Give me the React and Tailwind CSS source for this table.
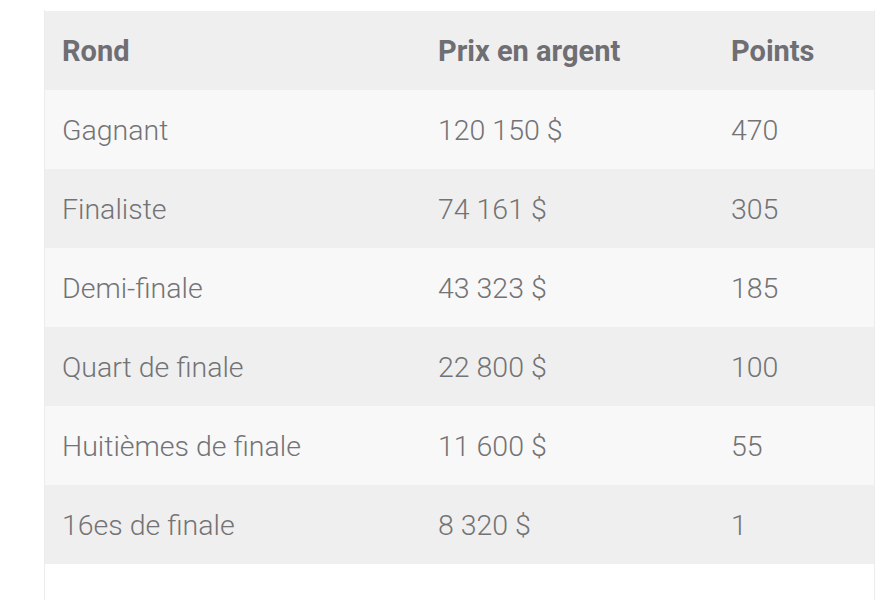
const rows = [
  ["Gagnant", "120 150 $", "470"],
  ["Finaliste", "74 161 $", "305"],
  ["Demi-finale", "43 323 $", "185"],
  ["Quart de finale", "22 800 $", "100"],
  ["Huitièmes de finale", "11 600 $", "55"],
  ["16es de finale", "8 320 $", "1"],
];

const App = () => {
  return (
    <div
      className="h-screen bg-white pt-[10px] pl-[44px] pr-[5px] overflow-hidden"
      style={{ fontFamily: "Roboto, 'Liberation Sans', sans-serif" }}
    >
      <div className="h-full border-x border-[#ececec] pt-px">
        <table className="w-full border-collapse table-fixed">
          <colgroup>
            <col className="w-[376px]" />
            <col className="w-[293px]" />
            <col />
          </colgroup>
          <thead>
            <tr className="h-[79px] bg-[#efefef]">
              <th className="text-left pl-[17px] pt-[3px] text-[29px] font-bold text-[#6e6e73]">Rond</th>
              <th className="text-left pl-[17px] pt-[3px] text-[29px] font-bold text-[#6e6e73]">Prix en argent</th>
              <th className="text-left pl-[17px] pt-[3px] text-[29px] font-bold text-[#6e6e73]">Points</th>
            </tr>
          </thead>
          <tbody>
            {rows.map((r, i) => (
              <tr
                key={r[0]}
                className={i % 2 === 0 ? "h-[79px] bg-[#f8f8f8]" : "h-[79px] bg-[#efefef]"}
              >
                <td className="pl-[17px] pt-[3px] text-[28.5px] font-light text-[#737376]">{r[0]}</td>
                <td className="pl-[17px] pt-[3px] text-[28.5px] font-light text-[#737376]">{r[1]}</td>
                <td className="pl-[17px] pt-[3px] text-[28.5px] font-light text-[#737376]">{r[2]}</td>
              </tr>
            ))}
          </tbody>
        </table>
      </div>
    </div>
  );
};

export default App;
